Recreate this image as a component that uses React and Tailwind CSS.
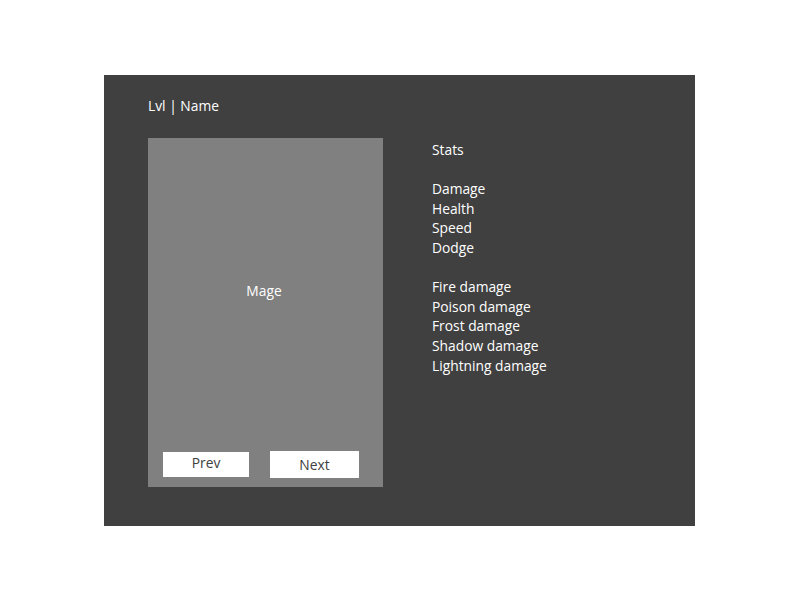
export default function App() {
    const stats = ["Damage", "Health", "Speed", "Dodge"];
    const damages = [
        "Fire damage",
        "Poison damage",
        "Frost damage",
        "Shadow damage",
        "Lightning damage",
    ];

    return (
        <div className="w-[800px] h-[600px] bg-white pt-[75px] pl-[104px] font-['Open_Sans',sans-serif] text-[13.8px] leading-[19.6px]">
            <div className="w-[591px] h-[451px] bg-[#404040] pt-[21px] pl-[44px] text-white">
                <div className="h-[20px]">Lvl | Name</div>

                <div className="mt-[22px] flex">
                    <div className="w-[235px] h-[349px] bg-[#808080] flex flex-col">
                        <div className="flex-1 pt-[143px] pr-[3px] text-center">Mage</div>
                        <div className="flex items-center pl-[15px] pb-[9px] gap-[21px] text-[#404040]">
                            <button className="w-[86px] h-[25px] bg-white pb-[3px]">
                                Prev
                            </button>
                            <button className="w-[89px] h-[27px] bg-white">
                                Next
                            </button>
                        </div>
                    </div>

                    <div className="ml-[49px] mt-[2px]">
                        <div>Stats</div>
                        <div className="h-[19.6px]" />
                        {stats.map((s) => (
                            <div key={s}>{s}</div>
                        ))}
                        <div className="h-[19.6px]" />
                        {damages.map((d) => (
                            <div key={d}>{d}</div>
                        ))}
                    </div>
                </div>
            </div>
        </div>
    );
}
